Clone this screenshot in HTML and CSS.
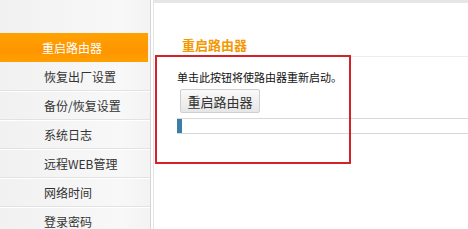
FILE: index.html
```html
<!doctype html>
<html lang="zh-CN">
  <head>
    <meta charset="UTF-8" />
    <title>重启路由器</title>
    <link rel="stylesheet" href="styles.css">
  </head>
  <body>
    <div class="page">
      <ul class="menu">
        <li class="menu-item active">重启路由器</li>
        <li class="menu-item">恢复出厂设置</li>
        <li class="menu-item">备份/恢复设置</li>
        <li class="menu-item">系统日志</li>
        <li class="menu-item">远程WEB管理</li>
        <li class="menu-item">网络时间</li>
        <li class="menu-item">登录密码</li>
      </ul>
      <div class="main">
        <h3 class="title">重启路由器</h3>
        <div class="panel">
          <p class="tip">单击此按钮将使路由器重新启动。</p>
          <button class="reboot-btn">重启路由器</button>
          <div class="progress"><div class="progress-bar" style="width: 5px"></div></div>
        </div>
        <div class="mark"></div>
      </div>
    </div>
  </body>
</html>
```

FILE: styles.css
```css
html, body {
  margin: 0;
  padding: 0;
  background: #fff;
}
body {
  font-family: "Noto Sans CJK SC", "Liberation Sans", sans-serif;
  font-size: 12px;
  color: #333;
}
.page {
  display: flex;
  height: 229px;
  overflow: hidden;
}
.menu {
  list-style: none;
  margin: 0;
  padding: 33px 0 0;
  width: 150px;
  flex-shrink: 0;
  background: linear-gradient(to right, #f1f1f1, #f8f8f8 80%, #f3f3f3);
  border-right: 1px solid #d6d6d6;
}
.menu-item {
  height: 28px;
  line-height: 29px;
  padding-left: 44px;
  border-bottom: 1px solid #e2e2e2;
  box-shadow: 0 1px 0 #fff;
  color: #333;
  font-size: 12px;
}
.menu-item.active {
  padding-left: 42px;
  background: linear-gradient(to bottom, #ffa200, #ff9500 60%, #ffa000);
  color: #fff;
  border-bottom: none;
  box-shadow: none;
  margin-right: 2px;
  height: 29px;
  line-height: 29px;
}
.main {
  flex: 1;
  position: relative;
  margin-left: 2px;
  border-left: 1px solid #e4e4e4;
  border-top: 3px solid #e6e6e6;
}
.title {
  margin: 0;
  padding: 33px 0 0 28px;
  height: 20px;
  line-height: 18px;
  font-size: 13px;
  color: #f39800;
  font-weight: bold;
  border-bottom: 1px solid #ececec;
}
.panel {
  padding: 11px 0 0 23px;
}
.tip {
  margin: 0;
  line-height: 18px;
  color: #111;
  font-size: 11px;
}
.reboot-btn {
  display: block;
  margin: 3px 0 0 3px;
  width: 80px;
  height: 24px;
  font-family: inherit;
  font-size: 13px;
  color: #333;
  background: linear-gradient(to bottom, #fafafa, #e6e6e6);
  border: 1px solid #cfcfcf;
  border-radius: 2px;
  padding: 0;
}
.progress {
  margin-top: 5px;
  height: 14px;
  border-top: 1px solid #d8d8d8;
  border-bottom: 1px solid #d8d8d8;
}
.progress-bar {
  height: 100%;
  background: #3d7ea6;
}
.mark {
  position: absolute;
  left: 1px;
  top: 52px;
  width: 192px;
  height: 105px;
  border: 2px solid #d2232a;
}
```
